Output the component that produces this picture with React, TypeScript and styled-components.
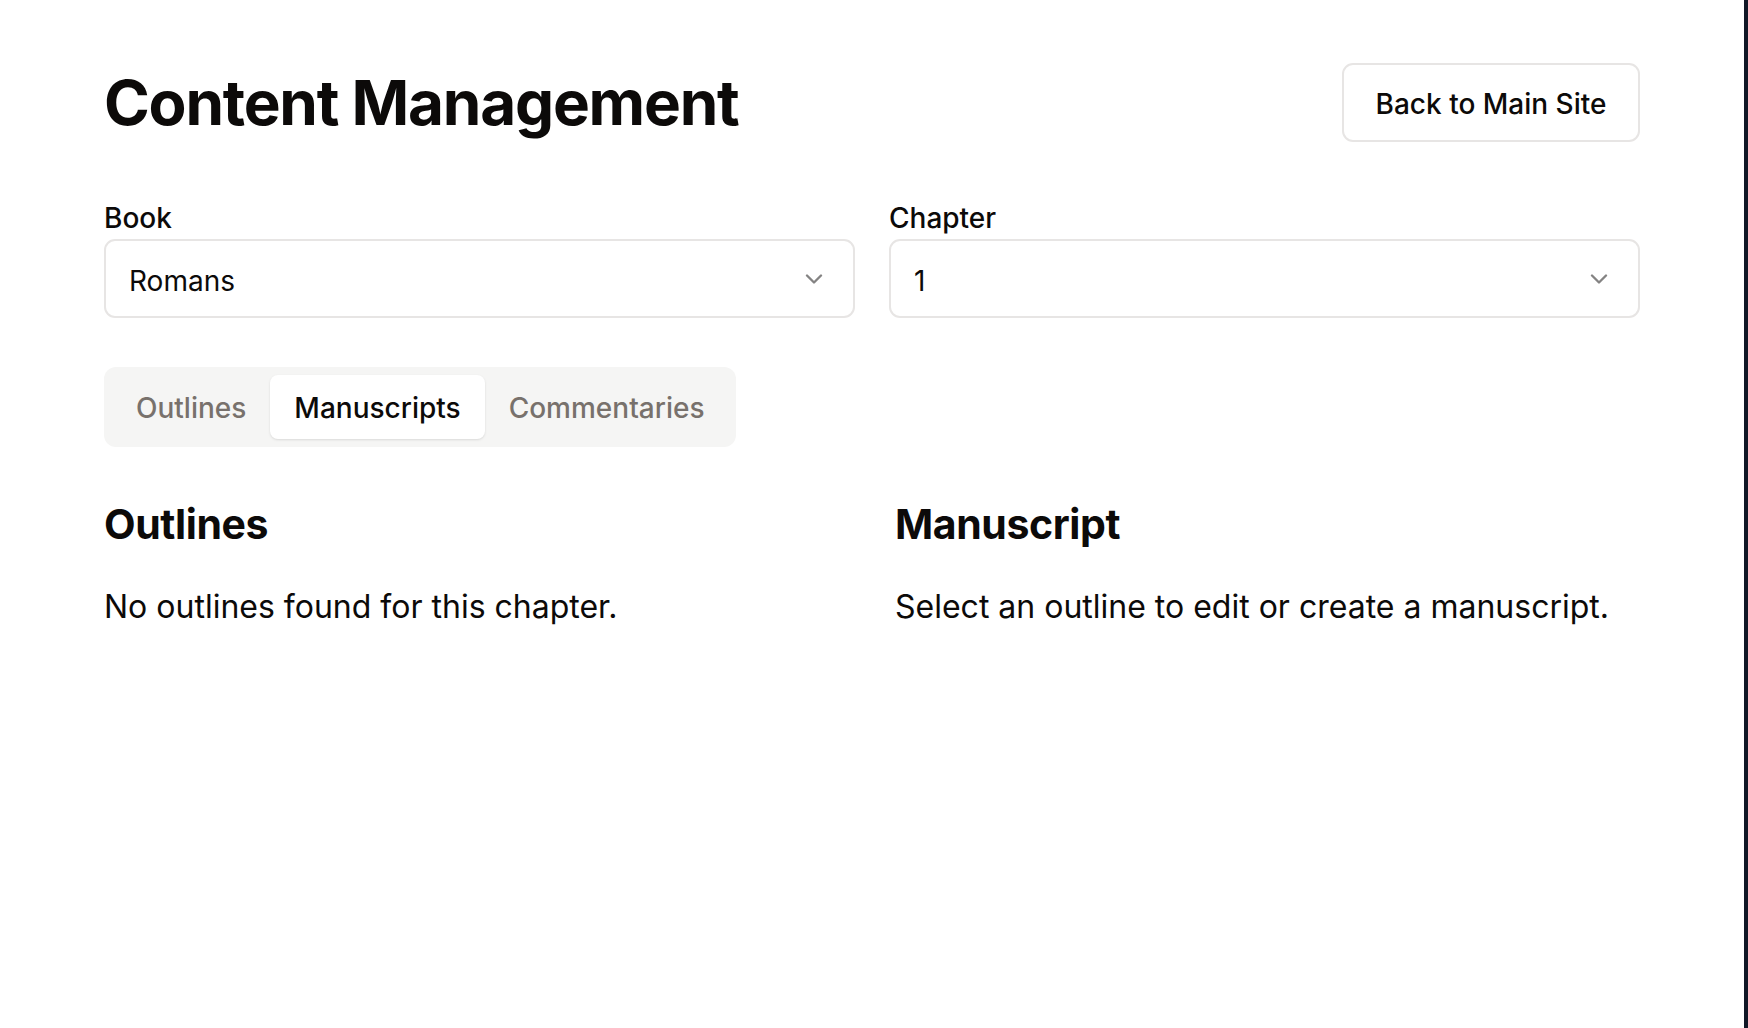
import React from "react";
import styled, { createGlobalStyle } from "styled-components";

const Global = createGlobalStyle`
  html, body { margin: 0; padding: 0; }
  body {
    background: #111827;
    font-family: Inter, "Noto Sans", "Liberation Sans", sans-serif;
    color: #0c0a09;
  }
  * { box-sizing: border-box; }
`;

const Page = styled.div`
  background: #ffffff;
  margin-right: 4px;
  min-height: 100vh;
`;

const Container = styled.main`
  padding: 63px 104px 0 104px;
  display: flex;
  flex-direction: column;
`;

const Header = styled.header`
  display: flex;
  align-items: center;
  justify-content: space-between;
`;

const Title = styled.h1`
  margin: 0;
  font-size: 62px;
  line-height: 1;
  font-weight: 700;
  letter-spacing: -0.02em;
  color: #0c0a09;
`;

const OutlineButton = styled.button`
  height: 79px;
  width: 298px;
  padding: 2px 0 0;
  border: 2px solid #e7e5e4;
  border-radius: 11px;
  background: #fff;
  font-family: inherit;
  font-size: 28px;
  font-weight: 500;
  color: #0c0a09;
  cursor: pointer;
`;

const SelectGrid = styled.div`
  display: grid;
  grid-template-columns: 1fr 1fr;
  column-gap: 34px;
  margin-top: 60px;
`;

const Field = styled.div`
  display: flex;
  flex-direction: column;
  gap: 5px;
`;

const Label = styled.label`
  font-size: 28px;
  line-height: 32px;
  font-weight: 500;
  color: #0c0a09;
`;

const SelectBox = styled.div`
  height: 79px;
  border: 2px solid #e7e5e4;
  border-radius: 11px;
  display: flex;
  align-items: center;
  justify-content: space-between;
  padding: 4px 25px 0 23px;
  font-size: 28px;
  color: #0c0a09;
`;

const Chevron = styled.svg`
  width: 28px;
  height: 28px;
  margin-top: -4px;
  color: #0c0a09;
  opacity: 0.5;
`;

const TabList = styled.div`
  margin-top: 49px;
  align-self: flex-start;
  display: flex;
  padding: 8px;
  height: 80px;
  background: #f5f5f4;
  border-radius: 12px;
`;

const Tab = styled.button<{ $active?: boolean }>`
  border: none;
  font-family: inherit;
  font-size: 28px;
  font-weight: 500;
  padding: 2px 24px 0;
  border-radius: 8px;
  cursor: pointer;
  background: ${(p) => (p.$active ? "#ffffff" : "transparent")};
  color: ${(p) => (p.$active ? "#0c0a09" : "#78716c")};
  box-shadow: ${(p) =>
    p.$active ? "0 1px 3px rgba(0,0,0,0.08), 0 1px 2px rgba(0,0,0,0.04)" : "none"};
`;

const Columns = styled.div`
  display: grid;
  grid-template-columns: 1fr 1fr;
  column-gap: 46px;
  margin-top: 52px;
`;

const Section = styled.section`
  display: flex;
  flex-direction: column;
  gap: 37px;
`;

const SectionTitle = styled.h2`
  margin: 0;
  font-size: 41px;
  line-height: 50px;
  font-weight: 700;
  letter-spacing: -0.01em;
  color: #0c0a09;
`;

const Muted = styled.p`
  margin: 0;
  font-size: 32px;
  line-height: 42px;
  color: #0c0a09;
`;

const ChevronDown = () => (
  <Chevron viewBox="0 0 24 24" fill="none" stroke="currentColor" strokeWidth={2} strokeLinecap="round" strokeLinejoin="round">
    <path d="m6 9 6 6 6-6" />
  </Chevron>
);

export default function App() {
  return (
    <>
      <Global />
      <Page>
        <Container>
          <Header>
            <Title>Content Management</Title>
            <OutlineButton>Back to Main Site</OutlineButton>
          </Header>

          <SelectGrid>
            <Field>
              <Label>Book</Label>
              <SelectBox>
                <span>Romans</span>
                <ChevronDown />
              </SelectBox>
            </Field>
            <Field>
              <Label>Chapter</Label>
              <SelectBox>
                <span>1</span>
                <ChevronDown />
              </SelectBox>
            </Field>
          </SelectGrid>

          <TabList>
            <Tab>Outlines</Tab>
            <Tab $active>Manuscripts</Tab>
            <Tab>Commentaries</Tab>
          </TabList>

          <Columns>
            <Section>
              <SectionTitle>Outlines</SectionTitle>
              <Muted>No outlines found for this chapter.</Muted>
            </Section>
            <Section>
              <SectionTitle>Manuscript</SectionTitle>
              <Muted>Select an outline to edit or create a manuscript.</Muted>
            </Section>
          </Columns>
        </Container>
      </Page>
    </>
  );
}
